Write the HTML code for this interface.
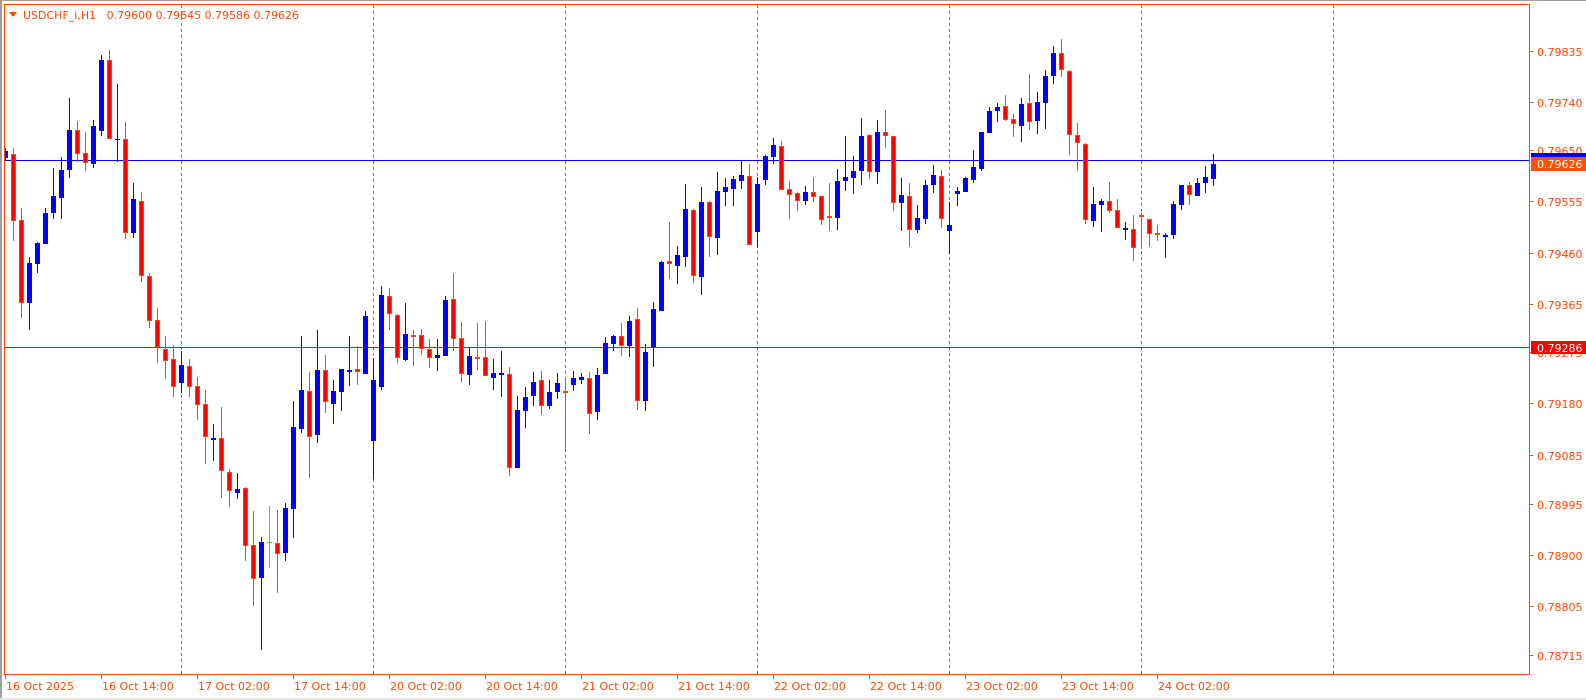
<!DOCTYPE html>
<html><head><meta charset="utf-8"><style>
html,body{margin:0;padding:0;background:#fff;width:1586px;height:700px;overflow:hidden}
svg{display:block}
text{font-family:"DejaVu Sans","Liberation Sans",sans-serif;font-size:11px;fill:#ff4500}
.bw{fill:#0000ff}.rw{fill:#ff4500}
.rb{fill:#ff0000;stroke:#ff4500;stroke-width:1}
</style></head><body>
<svg width="1586" height="700" viewBox="0 0 1586 700" xmlns="http://www.w3.org/2000/svg" shape-rendering="crispEdges">
<rect x="0" y="0" width="1586" height="700" fill="#fff"/>
<rect x="0" y="0" width="1586" height="1" fill="#a0a0a0"/>
<rect x="0" y="0" width="2" height="700" fill="#a0a0a0"/>
<rect x="0" y="698" width="1586" height="2" fill="#e4e4e4"/>
<g stroke="#ff4500" stroke-width="1" stroke-dasharray="3,3">
<line x1="181.5" y1="5" x2="181.5" y2="674"/><line x1="373.5" y1="5" x2="373.5" y2="674"/>
<line x1="565.5" y1="5" x2="565.5" y2="674"/><line x1="757.5" y1="5" x2="757.5" y2="674"/>
<line x1="949.5" y1="5" x2="949.5" y2="674"/><line x1="1141.5" y1="5" x2="1141.5" y2="674"/>
<line x1="1333.5" y1="5" x2="1333.5" y2="674"/>
</g>
<rect x="5" y="160" width="1524" height="1" fill="#0000ff"/>
<rect x="5" y="347" width="1524" height="1" fill="#ff0000"/>
<g class="bw">
<rect x="5" y="148" width="1" height="12"/>
<rect x="29" y="257" width="1" height="73"/>
<rect x="37" y="242" width="1" height="31"/>
<rect x="45" y="208" width="1" height="36"/>
<rect x="53" y="168" width="1" height="51"/>
<rect x="61" y="157" width="1" height="62"/>
<rect x="69" y="98" width="1" height="80"/>
<rect x="93" y="120" width="1" height="48"/>
<rect x="101" y="55" width="1" height="81"/>
<rect x="117" y="84" width="1" height="78"/>
<rect x="133" y="183" width="1" height="55"/>
<rect x="181" y="351" width="1" height="42"/>
<rect x="213" y="424" width="1" height="37"/>
<rect x="237" y="473" width="1" height="26"/>
<rect x="261" y="537" width="1" height="113"/>
<rect x="285" y="503" width="1" height="58"/>
<rect x="293" y="401" width="1" height="137"/>
<rect x="301" y="336" width="1" height="97"/>
<rect x="317" y="330" width="1" height="113"/>
<rect x="333" y="380" width="1" height="44"/>
<rect x="341" y="369" width="1" height="42"/>
<rect x="349" y="336" width="1" height="50"/>
<rect x="365" y="311" width="1" height="63"/>
<rect x="373" y="358" width="1" height="121"/>
<rect x="381" y="286" width="1" height="104"/>
<rect x="405" y="303" width="1" height="58"/>
<rect x="437" y="339" width="1" height="32"/>
<rect x="445" y="296" width="1" height="60"/>
<rect x="469" y="347" width="1" height="38"/>
<rect x="493" y="359" width="1" height="31"/>
<rect x="501" y="351" width="1" height="46"/>
<rect x="517" y="396" width="1" height="72"/>
<rect x="525" y="387" width="1" height="41"/>
<rect x="533" y="372" width="1" height="34"/>
<rect x="549" y="380" width="1" height="29"/>
<rect x="557" y="373" width="1" height="26"/>
<rect x="573" y="371" width="1" height="20"/>
<rect x="581" y="373" width="1" height="11"/>
<rect x="597" y="368" width="1" height="52"/>
<rect x="605" y="337" width="1" height="37"/>
<rect x="613" y="335" width="1" height="16"/>
<rect x="629" y="316" width="1" height="41"/>
<rect x="645" y="344" width="1" height="67"/>
<rect x="653" y="302" width="1" height="65"/>
<rect x="661" y="261" width="1" height="50"/>
<rect x="677" y="246" width="1" height="38"/>
<rect x="685" y="184" width="1" height="83"/>
<rect x="701" y="187" width="1" height="108"/>
<rect x="717" y="172" width="1" height="83"/>
<rect x="725" y="178" width="1" height="28"/>
<rect x="733" y="176" width="1" height="30"/>
<rect x="741" y="160" width="1" height="29"/>
<rect x="757" y="177" width="1" height="70"/>
<rect x="765" y="155" width="1" height="30"/>
<rect x="773" y="138" width="1" height="26"/>
<rect x="805" y="186" width="1" height="19"/>
<rect x="837" y="169" width="1" height="61"/>
<rect x="845" y="136" width="1" height="55"/>
<rect x="853" y="156" width="1" height="38"/>
<rect x="861" y="118" width="1" height="67"/>
<rect x="877" y="120" width="1" height="64"/>
<rect x="901" y="178" width="1" height="53"/>
<rect x="917" y="205" width="1" height="28"/>
<rect x="925" y="180" width="1" height="44"/>
<rect x="933" y="165" width="1" height="28"/>
<rect x="949" y="202" width="1" height="52"/>
<rect x="957" y="187" width="1" height="19"/>
<rect x="965" y="177" width="1" height="15"/>
<rect x="973" y="150" width="1" height="33"/>
<rect x="981" y="132" width="1" height="39"/>
<rect x="989" y="107" width="1" height="26"/>
<rect x="997" y="103" width="1" height="19"/>
<rect x="1021" y="98" width="1" height="44"/>
<rect x="1037" y="92" width="1" height="42"/>
<rect x="1045" y="70" width="1" height="59"/>
<rect x="1053" y="46" width="1" height="38"/>
<rect x="1093" y="187" width="1" height="40"/>
<rect x="1101" y="199" width="1" height="33"/>
<rect x="1125" y="222" width="1" height="18"/>
<rect x="1165" y="233" width="1" height="25"/>
<rect x="1173" y="201" width="1" height="38"/>
<rect x="1181" y="185" width="1" height="25"/>
<rect x="1197" y="178" width="1" height="18"/>
<rect x="1205" y="166" width="1" height="27"/>
<rect x="1213" y="154" width="1" height="32"/>
</g>
<g class="rw">
<rect x="13" y="148" width="1" height="93"/>
<rect x="21" y="208" width="1" height="110"/>
<rect x="77" y="121" width="1" height="41"/>
<rect x="85" y="132" width="1" height="39"/>
<rect x="109" y="50" width="1" height="89"/>
<rect x="125" y="122" width="1" height="117"/>
<rect x="141" y="192" width="1" height="90"/>
<rect x="149" y="273" width="1" height="55"/>
<rect x="157" y="308" width="1" height="55"/>
<rect x="165" y="336" width="1" height="43"/>
<rect x="173" y="345" width="1" height="52"/>
<rect x="189" y="359" width="1" height="38"/>
<rect x="197" y="377" width="1" height="43"/>
<rect x="205" y="390" width="1" height="74"/>
<rect x="221" y="407" width="1" height="91"/>
<rect x="229" y="469" width="1" height="38"/>
<rect x="245" y="487" width="1" height="74"/>
<rect x="253" y="511" width="1" height="95"/>
<rect x="277" y="510" width="1" height="83"/>
<rect x="309" y="372" width="1" height="106"/>
<rect x="325" y="355" width="1" height="58"/>
<rect x="357" y="346" width="1" height="39"/>
<rect x="389" y="288" width="1" height="42"/>
<rect x="397" y="314" width="1" height="49"/>
<rect x="413" y="330" width="1" height="36"/>
<rect x="421" y="329" width="1" height="26"/>
<rect x="429" y="339" width="1" height="29"/>
<rect x="453" y="273" width="1" height="78"/>
<rect x="461" y="322" width="1" height="60"/>
<rect x="477" y="323" width="1" height="47"/>
<rect x="485" y="321" width="1" height="55"/>
<rect x="509" y="367" width="1" height="109"/>
<rect x="541" y="371" width="1" height="44"/>
<rect x="565" y="377" width="1" height="74"/>
<rect x="589" y="372" width="1" height="62"/>
<rect x="621" y="323" width="1" height="33"/>
<rect x="637" y="308" width="1" height="102"/>
<rect x="669" y="222" width="1" height="57"/>
<rect x="693" y="209" width="1" height="74"/>
<rect x="709" y="201" width="1" height="56"/>
<rect x="749" y="164" width="1" height="81"/>
<rect x="781" y="141" width="1" height="49"/>
<rect x="789" y="181" width="1" height="38"/>
<rect x="797" y="192" width="1" height="19"/>
<rect x="813" y="177" width="1" height="25"/>
<rect x="821" y="196" width="1" height="29"/>
<rect x="829" y="183" width="1" height="48"/>
<rect x="869" y="134" width="1" height="45"/>
<rect x="885" y="110" width="1" height="38"/>
<rect x="893" y="136" width="1" height="75"/>
<rect x="909" y="183" width="1" height="64"/>
<rect x="941" y="170" width="1" height="58"/>
<rect x="1005" y="95" width="1" height="26"/>
<rect x="1013" y="114" width="1" height="23"/>
<rect x="1029" y="74" width="1" height="56"/>
<rect x="1061" y="39" width="1" height="38"/>
<rect x="1069" y="70" width="1" height="85"/>
<rect x="1077" y="123" width="1" height="48"/>
<rect x="1085" y="143" width="1" height="81"/>
<rect x="1109" y="182" width="1" height="31"/>
<rect x="1117" y="199" width="1" height="29"/>
<rect x="1133" y="215" width="1" height="46"/>
<rect x="1141" y="213" width="1" height="36"/>
<rect x="1149" y="219" width="1" height="28"/>
<rect x="1157" y="225" width="1" height="16"/>
<rect x="1189" y="182" width="1" height="23"/>
</g>
<rect x="269" y="506" width="1" height="62" fill="#00ff00"/>
<rect x="267" y="542" width="5" height="1" fill="#00ff00"/>
<g class="bw">
<rect x="4" y="151" width="4" height="7"/>
<rect x="27" y="263" width="5" height="40"/>
<rect x="35" y="243" width="5" height="21"/>
<rect x="43" y="213" width="5" height="31"/>
<rect x="51" y="196" width="5" height="17"/>
<rect x="59" y="170" width="5" height="28"/>
<rect x="67" y="130" width="5" height="40"/>
<rect x="91" y="126" width="5" height="38"/>
<rect x="99" y="60" width="5" height="71"/>
<rect x="115" y="139" width="5" height="1"/>
<rect x="131" y="199" width="5" height="34"/>
<rect x="179" y="365" width="5" height="18"/>
<rect x="211" y="438" width="5" height="2"/>
<rect x="235" y="489" width="5" height="4"/>
<rect x="259" y="542" width="5" height="36"/>
<rect x="283" y="508" width="5" height="45"/>
<rect x="291" y="427" width="5" height="82"/>
<rect x="299" y="390" width="5" height="39"/>
<rect x="315" y="370" width="5" height="65"/>
<rect x="331" y="391" width="5" height="13"/>
<rect x="339" y="369" width="5" height="23"/>
<rect x="347" y="370" width="5" height="2"/>
<rect x="363" y="316" width="5" height="58"/>
<rect x="371" y="380" width="5" height="61"/>
<rect x="379" y="295" width="5" height="92"/>
<rect x="403" y="334" width="5" height="26"/>
<rect x="435" y="355" width="5" height="3"/>
<rect x="443" y="300" width="5" height="56"/>
<rect x="467" y="356" width="5" height="19"/>
<rect x="491" y="373" width="5" height="5"/>
<rect x="499" y="373" width="5" height="2"/>
<rect x="515" y="410" width="5" height="58"/>
<rect x="523" y="397" width="5" height="14"/>
<rect x="531" y="382" width="5" height="14"/>
<rect x="547" y="392" width="5" height="14"/>
<rect x="555" y="383" width="5" height="9"/>
<rect x="571" y="378" width="5" height="7"/>
<rect x="579" y="377" width="5" height="3"/>
<rect x="595" y="375" width="5" height="37"/>
<rect x="603" y="343" width="5" height="31"/>
<rect x="611" y="336" width="5" height="8"/>
<rect x="627" y="321" width="5" height="25"/>
<rect x="643" y="352" width="5" height="49"/>
<rect x="651" y="309" width="5" height="38"/>
<rect x="659" y="262" width="5" height="49"/>
<rect x="675" y="255" width="5" height="11"/>
<rect x="683" y="209" width="5" height="48"/>
<rect x="699" y="202" width="5" height="75"/>
<rect x="715" y="191" width="5" height="47"/>
<rect x="723" y="187" width="5" height="5"/>
<rect x="731" y="179" width="5" height="10"/>
<rect x="739" y="175" width="5" height="6"/>
<rect x="755" y="184" width="5" height="48"/>
<rect x="763" y="156" width="5" height="24"/>
<rect x="771" y="145" width="5" height="12"/>
<rect x="803" y="192" width="5" height="9"/>
<rect x="835" y="181" width="5" height="37"/>
<rect x="843" y="177" width="5" height="4"/>
<rect x="851" y="171" width="5" height="7"/>
<rect x="859" y="136" width="5" height="35"/>
<rect x="875" y="132" width="5" height="40"/>
<rect x="899" y="195" width="5" height="8"/>
<rect x="915" y="218" width="5" height="12"/>
<rect x="923" y="185" width="5" height="34"/>
<rect x="931" y="175" width="5" height="10"/>
<rect x="947" y="225" width="5" height="6"/>
<rect x="955" y="191" width="5" height="3"/>
<rect x="963" y="178" width="5" height="14"/>
<rect x="971" y="167" width="5" height="13"/>
<rect x="979" y="132" width="5" height="37"/>
<rect x="987" y="111" width="5" height="22"/>
<rect x="995" y="107" width="5" height="4"/>
<rect x="1019" y="104" width="5" height="22"/>
<rect x="1035" y="102" width="5" height="19"/>
<rect x="1043" y="76" width="5" height="27"/>
<rect x="1051" y="53" width="5" height="23"/>
<rect x="1091" y="204" width="5" height="17"/>
<rect x="1099" y="201" width="5" height="4"/>
<rect x="1123" y="228" width="5" height="2"/>
<rect x="1163" y="235" width="5" height="2"/>
<rect x="1171" y="204" width="5" height="31"/>
<rect x="1179" y="185" width="5" height="20"/>
<rect x="1195" y="183" width="5" height="13"/>
<rect x="1203" y="177" width="5" height="6"/>
<rect x="1211" y="164" width="5" height="15"/>
</g>
<g class="rb">
<rect x="11.5" y="154.5" width="4" height="66"/>
<rect x="19.5" y="220.5" width="4" height="82"/>
<rect x="75.5" y="130.5" width="4" height="23"/>
<rect x="83.5" y="153.5" width="4" height="9"/>
<rect x="107.5" y="60.5" width="4" height="78"/>
<rect x="123.5" y="139.5" width="4" height="93"/>
<rect x="139.5" y="201.5" width="4" height="74"/>
<rect x="147.5" y="276.5" width="4" height="44"/>
<rect x="155.5" y="320.5" width="4" height="26"/>
<rect x="163.5" y="349.5" width="4" height="11"/>
<rect x="171.5" y="359.5" width="4" height="27"/>
<rect x="187.5" y="366.5" width="4" height="20"/>
<rect x="195.5" y="386.5" width="4" height="18"/>
<rect x="203.5" y="404.5" width="4" height="32"/>
<rect x="219.5" y="438.5" width="4" height="32"/>
<rect x="227.5" y="472.5" width="4" height="18"/>
<rect x="243.5" y="488.5" width="4" height="57"/>
<rect x="251.5" y="545.5" width="4" height="33"/>
<rect x="275.5" y="543.5" width="4" height="10"/>
<rect x="307.5" y="391.5" width="4" height="45"/>
<rect x="323.5" y="370.5" width="4" height="31"/>
<rect x="355.5" y="369.5" width="4" height="2"/>
<rect x="387.5" y="296.5" width="4" height="17"/>
<rect x="395.5" y="315.5" width="4" height="42"/>
<rect x="411.5" y="335.5" width="4" height="1"/>
<rect x="419.5" y="335.5" width="4" height="13"/>
<rect x="427.5" y="349.5" width="4" height="8"/>
<rect x="451.5" y="299.5" width="4" height="39"/>
<rect x="459.5" y="338.5" width="4" height="35"/>
<rect x="475.5" y="357.5" width="4" height="1"/>
<rect x="483.5" y="357.5" width="4" height="18"/>
<rect x="507.5" y="374.5" width="4" height="93"/>
<rect x="539.5" y="380.5" width="4" height="25"/>
<rect x="563.5" y="391.5" width="4" height="1"/>
<rect x="587.5" y="378.5" width="4" height="35"/>
<rect x="619.5" y="336.5" width="4" height="9"/>
<rect x="635.5" y="319.5" width="4" height="81"/>
<rect x="667.5" y="261.5" width="4" height="2"/>
<rect x="691.5" y="210.5" width="4" height="65"/>
<rect x="707.5" y="202.5" width="4" height="34"/>
<rect x="747.5" y="176.5" width="4" height="68"/>
<rect x="779.5" y="146.5" width="4" height="43"/>
<rect x="787.5" y="189.5" width="4" height="5"/>
<rect x="795.5" y="193.5" width="4" height="7"/>
<rect x="811.5" y="192.5" width="4" height="4"/>
<rect x="819.5" y="196.5" width="4" height="23"/>
<rect x="827.5" y="216.5" width="4" height="1"/>
<rect x="867.5" y="135.5" width="4" height="36"/>
<rect x="883.5" y="132.5" width="4" height="3"/>
<rect x="891.5" y="136.5" width="4" height="66"/>
<rect x="907.5" y="196.5" width="4" height="33"/>
<rect x="939.5" y="176.5" width="4" height="42"/>
<rect x="1003.5" y="106.5" width="4" height="13"/>
<rect x="1011.5" y="119.5" width="4" height="4"/>
<rect x="1027.5" y="103.5" width="4" height="18"/>
<rect x="1059.5" y="53.5" width="4" height="16"/>
<rect x="1067.5" y="71.5" width="4" height="63"/>
<rect x="1075.5" y="135.5" width="4" height="7"/>
<rect x="1083.5" y="144.5" width="4" height="75"/>
<rect x="1107.5" y="201.5" width="4" height="9"/>
<rect x="1115.5" y="210.5" width="4" height="17"/>
<rect x="1131.5" y="229.5" width="4" height="18"/>
<rect x="1139.5" y="215.5" width="4" height="1"/>
<rect x="1147.5" y="219.5" width="4" height="14"/>
<rect x="1155.5" y="233.5" width="4" height="1"/>
<rect x="1187.5" y="185.5" width="4" height="9"/>
</g>
<rect x="4.5" y="4.5" width="1525" height="670" fill="none" stroke="#ff4500" stroke-width="1"/>
<polygon points="9,12 17,12 13,17" fill="#ff4500"/>
<text x="23" y="19">USDCHF_i,H1&#160;&#160;&#160;0.79600 0.79645 0.79586 0.79626</text>
<g fill="#ff4500">
<rect x="1530" y="51" width="3" height="1"/><rect x="1530" y="102" width="3" height="1"/>
<rect x="1530" y="150" width="3" height="1"/><rect x="1530" y="201" width="3" height="1"/>
<rect x="1530" y="253" width="3" height="1"/><rect x="1530" y="304" width="3" height="1"/>
<rect x="1530" y="352" width="3" height="1"/><rect x="1530" y="403" width="3" height="1"/>
<rect x="1530" y="455" width="3" height="1"/><rect x="1530" y="504" width="3" height="1"/>
<rect x="1530" y="555" width="3" height="1"/><rect x="1530" y="606" width="3" height="1"/>
<rect x="1530" y="655" width="3" height="1"/>
</g>
<g>
<text x="1537" y="56">0.79835</text>
<text x="1537" y="107">0.79740</text>
<text x="1537" y="155">0.79650</text>
<text x="1537" y="206">0.79555</text>
<text x="1537" y="258">0.79460</text>
<text x="1537" y="309">0.79365</text>
<text x="1537" y="357">0.79275</text>
<text x="1537" y="408">0.79180</text>
<text x="1537" y="460">0.79085</text>
<text x="1537" y="509">0.78995</text>
<text x="1537" y="560">0.78900</text>
<text x="1537" y="611">0.78805</text>
<text x="1537" y="660">0.78715</text>
</g>
<rect x="1531" y="153" width="55" height="4" fill="#0000ff"/>
<rect x="1531" y="157" width="55" height="14" fill="#ff5000"/>
<text x="1537" y="168" style="fill:#fff">0.79626</text>
<rect x="1531" y="341" width="55" height="13" fill="#ff0000"/>
<text x="1537" y="352" style="fill:#fff">0.79286</text>
<g fill="#ff4500">
<rect x="5" y="675" width="1" height="4"/><rect x="101" y="675" width="1" height="4"/>
<rect x="197" y="675" width="1" height="4"/><rect x="293" y="675" width="1" height="4"/>
<rect x="389" y="675" width="1" height="4"/><rect x="485" y="675" width="1" height="4"/>
<rect x="581" y="675" width="1" height="4"/><rect x="677" y="675" width="1" height="4"/>
<rect x="773" y="675" width="1" height="4"/><rect x="869" y="675" width="1" height="4"/>
<rect x="965" y="675" width="1" height="4"/><rect x="1061" y="675" width="1" height="4"/>
<rect x="1157" y="675" width="1" height="4"/>
</g>
<g>
<text x="6" y="690">16 Oct 2025</text>
<text x="102" y="690">16 Oct 14:00</text>
<text x="198" y="690">17 Oct 02:00</text>
<text x="294" y="690">17 Oct 14:00</text>
<text x="390" y="690">20 Oct 02:00</text>
<text x="486" y="690">20 Oct 14:00</text>
<text x="582" y="690">21 Oct 02:00</text>
<text x="678" y="690">21 Oct 14:00</text>
<text x="774" y="690">22 Oct 02:00</text>
<text x="870" y="690">22 Oct 14:00</text>
<text x="966" y="690">23 Oct 02:00</text>
<text x="1062" y="690">23 Oct 14:00</text>
<text x="1158" y="690">24 Oct 02:00</text>
</g>
</svg>
</body></html>
